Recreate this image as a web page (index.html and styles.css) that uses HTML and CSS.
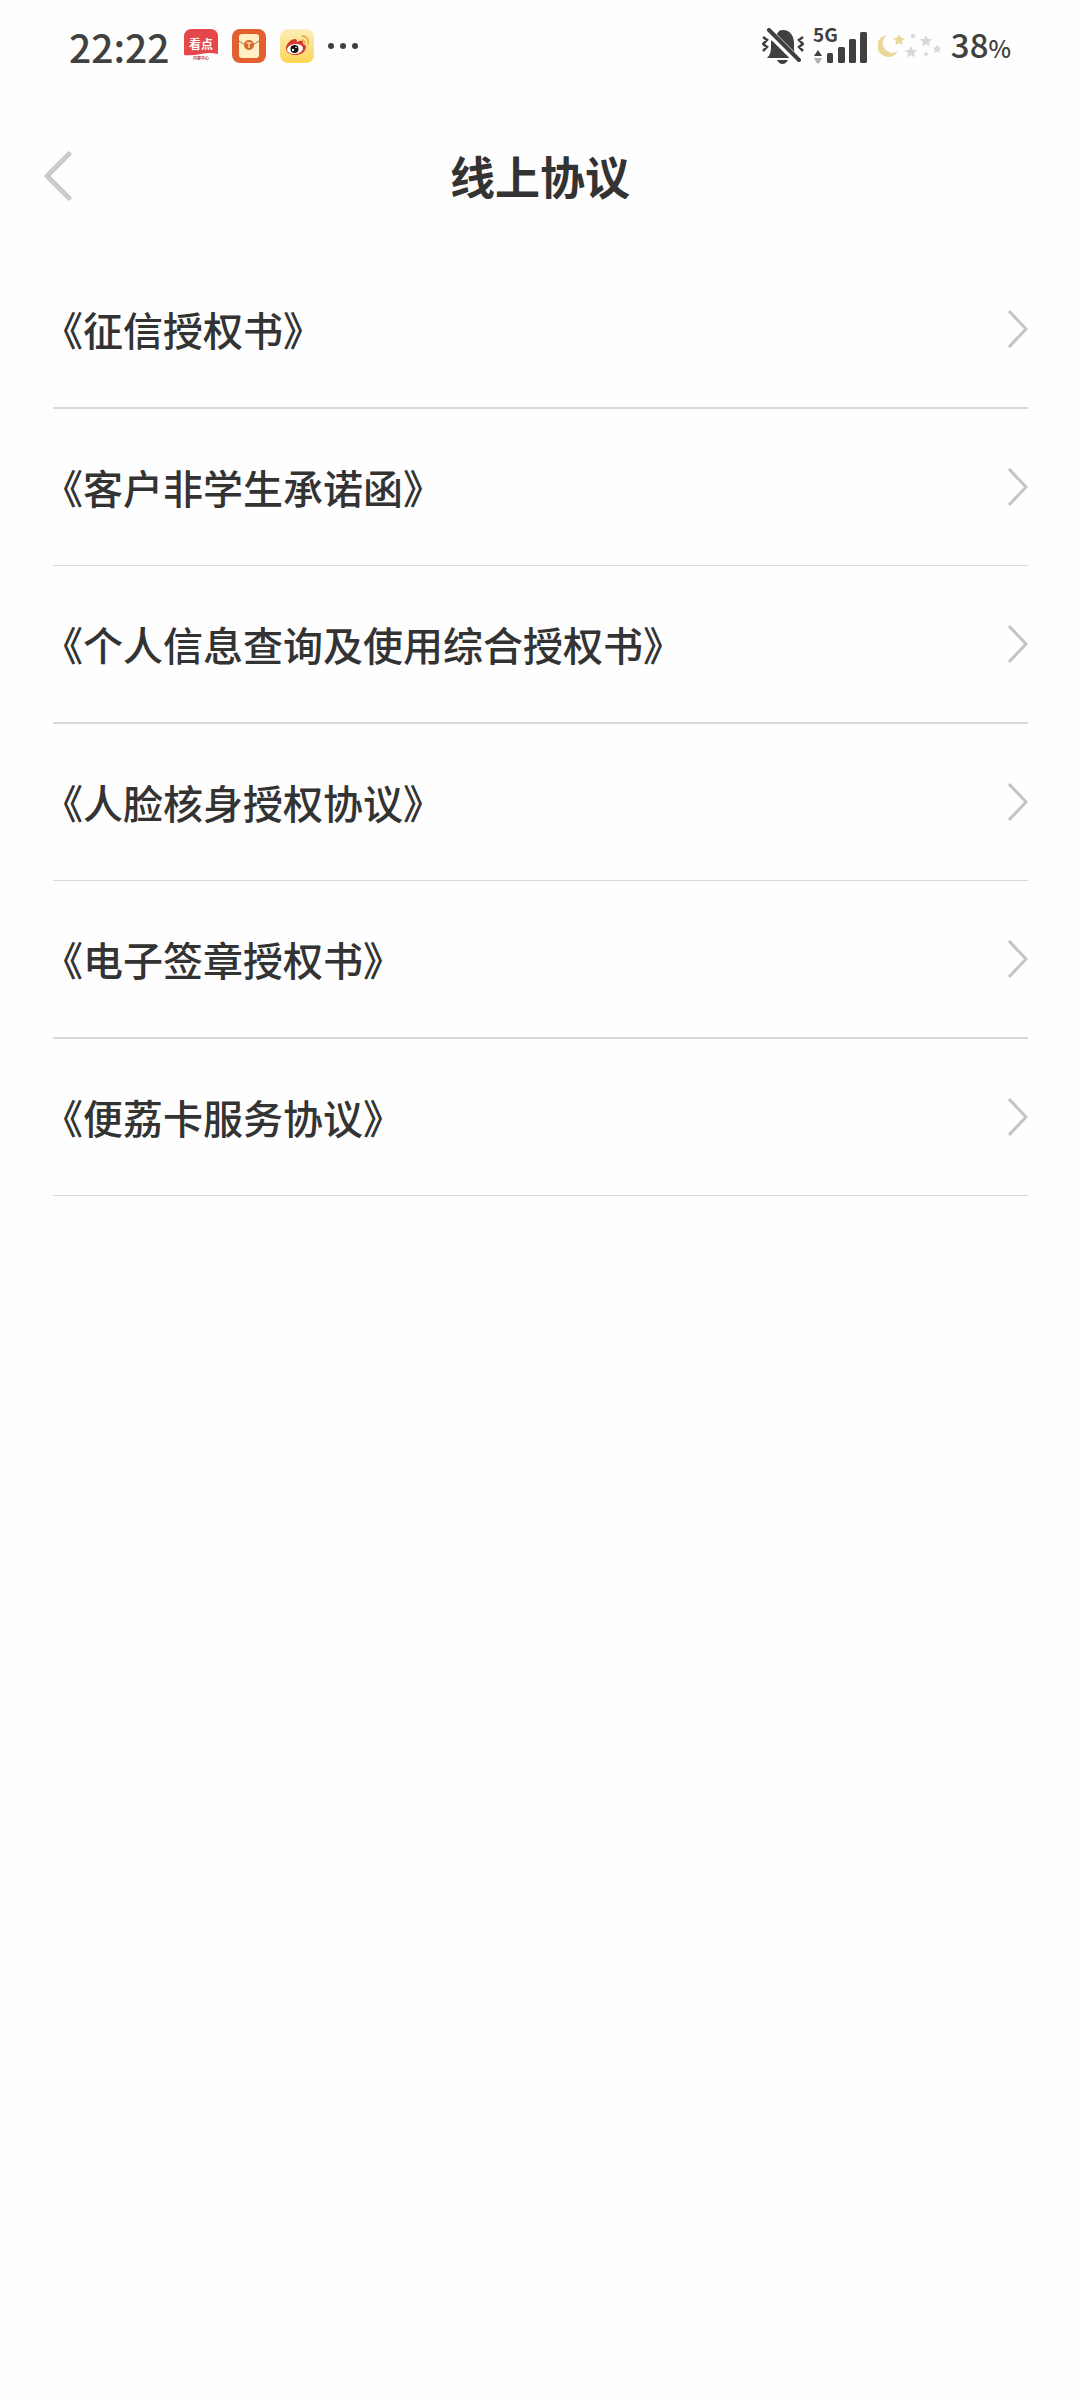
FILE: index.html
```html
<!DOCTYPE html>
<html lang="zh-CN">
<head>
    <meta charset="UTF-8">
    <meta name="viewport" content="width=device-width, initial-scale=1.0">
    <title>线上协议</title>
    <link rel="stylesheet" href="styles.css">
</head>
<body>
    <div class="status-bar">
        <div class="status-left">
            <span class="time">22:22</span>
            <svg class="app-icon" viewBox="0 0 34 34" aria-hidden="true">
                <path d="M0 26V8Q0 0 8 0H26Q34 0 34 8V25Q25 23 17 25Q8 27 0 26Z" fill="#e5474a"/>
                <text class="app-name" x="17" y="20" text-anchor="middle">看点</text>
                <text class="app-sub" x="17" y="31" text-anchor="middle">内容中心</text>
            </svg>
            <svg class="app-icon" viewBox="0 0 34 34" aria-hidden="true">
                <rect width="34" height="34" rx="8" fill="#e2602f"/>
                <rect x="7" y="5" width="20" height="24" rx="3" fill="#fff0c4"/>
                <path d="M7 12Q11 16 17 16Q23 16 27 12" fill="none" stroke="#a8673c"/>
                <circle cx="17" cy="16" r="5" fill="#d8662f"/>
                <path d="M14.500 14H19.500M17 14V19" stroke="#fbd7a4" stroke-width="1.500"/>
            </svg>
            <svg class="app-icon" viewBox="0 0 34 34" aria-hidden="true">
                <defs>
                    <linearGradient id="weiboBg" x1="0" y1="0" x2="0" y2="1">
                        <stop offset="0" stop-color="#fbeebb"/>
                        <stop offset="1" stop-color="#fbd655"/>
                    </linearGradient>
                </defs>
                <rect width="34" height="34" rx="8" fill="url(#weiboBg)"/>
                <path d="M6 19C6 15 11 10 15 10C17 10 17 12 17 13C20 11 24 11 23 15C26 16 27 18 25 21C22 28 6 28 6 19Z" fill="#d7382f"/>
                <ellipse cx="15" cy="20" rx="8" ry="5" fill="#fff" transform="rotate(-8 15 20)"/>
                <circle cx="14.500" cy="20" r="4" fill="#17100e"/>
                <circle cx="13" cy="21" r="1.200" fill="#fff"/>
                <circle cx="16" cy="18.500" r=".8" fill="#fff"/>
                <path d="M22 7Q29 7 28 15M22 11Q25 11 24.500 14" fill="none" stroke="#eea13c" stroke-width="1.400" stroke-linecap="round"/>
            </svg>
            <svg class="more-icon" viewBox="0 0 30 6" aria-hidden="true">
                <g fill="#404040"><circle cx="3" cy="3" r="3"/><circle cx="15" cy="3" r="3"/><circle cx="27" cy="3" r="3"/></g>
            </svg>
        </div>
        <div class="status-right">
            <svg class="mute-icon" viewBox="0 0 42 36" aria-hidden="true">
                <path d="M5 30C8 27 9 24 9 19V15C9 8 14 2 21 2C28 2 32 8 32 15V21C32 25 34 28 36 30Z" fill="#404040"/>
                <path d="M15 32H26Q24 36 20.500 36Q17 36 15 32Z" fill="#404040"/>
                <path d="M5 2L36 33" stroke="#fefefe" stroke-width="8"/>
                <path d="M8 2H18L9 13Z" fill="#fefefe"/>
                <path d="M7 2L37 32" stroke="#404040" stroke-width="4" stroke-linecap="round"/>
                <path d="M1 9L5 12L1 16L5 19L1 23M41 9L37 12L41 16L37 19L41 23" fill="none" stroke="#404040" stroke-width="2.500"/>
            </svg>
            <svg class="signal-icon" viewBox="0 -12 56 60" aria-label="5G">
                <text class="network" x="0" y="14">5G</text>
                <path d="M1 28L5 22L9 28Z" fill="#404040"/>
                <path d="M1 30H9L7 34Q5 37 3 34Z" fill="#b5b5b5"/>
                <g fill="#404040">
                    <rect x="14" y="25" width="6" height="10" rx="1.500"/>
                    <rect x="25" y="19" width="7" height="16" rx="1.500"/>
                    <rect x="36" y="11" width="7" height="24" rx="1.500"/>
                    <rect x="47" y="4" width="7" height="31" rx="1.500"/>
                </g>
            </svg>
            <svg class="battery-icon" viewBox="0 0 64 26" aria-hidden="true">
                <defs>
                    <path id="star" d="M0 -6L1.800 -2.300L6 -1.800L3 1.100L3.700 5.200L0 3.200L-3.700 5.200L-3 1.100L-6 -1.800L-1.800 -2.300Z"/>
                </defs>
                <path d="M9 2A11 11 0 1 0 20 18A9 9 0 0 1 9 2Z" fill="#ecd79b"/>
                <use href="#star" x="21" y="7" fill="#ecd79b"/>
                <g fill="#d8d8d8">
                    <use href="#star" x="33" y="19"/>
                    <use href="#star" x="48" y="8"/>
                    <use href="#star" transform="translate(59 16) scale(.75)"/>
                    <use href="#star" transform="translate(35 3) scale(.5)"/>
                    <use href="#star" transform="translate(48 21) scale(.45)"/>
                </g>
            </svg>
            <span class="battery">38<span class="percent">%</span></span>
        </div>
    </div>

    <header class="header">
        <button class="back" type="button" aria-label="返回">
            <svg class="back-icon" viewBox="0 0 30 50" aria-hidden="true">
                <path d="M26 3L4 25L26 47" fill="none" stroke="#cbcbcb" stroke-width="5" stroke-linecap="round" stroke-linejoin="round"/>
            </svg>
        </button>
        <h1 class="title">线上协议</h1>
    </header>

    <main>
        <ul class="list">
            <li class="item"><a class="link" href="#"><span class="name">《征信授权书》</span><svg class="arrow" viewBox="0 0 20 38" aria-hidden="true"><path d="M1 1L18 19L1 37"/></svg></a></li>
            <li class="item"><a class="link" href="#"><span class="name">《客户非学生承诺函》</span><svg class="arrow" viewBox="0 0 20 38" aria-hidden="true"><path d="M1 1L18 19L1 37"/></svg></a></li>
            <li class="item"><a class="link" href="#"><span class="name">《个人信息查询及使用综合授权书》</span><svg class="arrow" viewBox="0 0 20 38" aria-hidden="true"><path d="M1 1L18 19L1 37"/></svg></a></li>
            <li class="item"><a class="link" href="#"><span class="name">《人脸核身授权协议》</span><svg class="arrow" viewBox="0 0 20 38" aria-hidden="true"><path d="M1 1L18 19L1 37"/></svg></a></li>
            <li class="item"><a class="link" href="#"><span class="name">《电子签章授权书》</span><svg class="arrow" viewBox="0 0 20 38" aria-hidden="true"><path d="M1 1L18 19L1 37"/></svg></a></li>
            <li class="item"><a class="link" href="#"><span class="name">《便荔卡服务协议》</span><svg class="arrow" viewBox="0 0 20 38" aria-hidden="true"><path d="M1 1L18 19L1 37"/></svg></a></li>
        </ul>
    </main>
</body>
</html>
```
FILE: styles.css
```css
* {
    box-sizing: border-box;
}
body {
    margin: 0;
    background-color: #fefefe;
    color: #333;
    font-family: "Noto Sans CJK SC", sans-serif;
}
svg {
    display: block;
    flex: none;
}

/* status bar */
.status-bar {
    display: flex;
    justify-content: space-between;
    align-items: center;
    height: 92px;
    padding: 0 69px;
    color: #404040;
}
.status-left, .status-right {
    display: flex;
    align-items: center;
}
.status-left {
    gap: 14px;
}
.time {
    font-size: 39px;
    font-weight: 500;
    line-height: 40px;
}
.app-icon {
    width: 34px;
    height: 34px;
}
.app-name {
    font-size: 12px;
    font-weight: 700;
    fill: #fff;
}
.app-sub {
    font-size: 4px;
    font-weight: 700;
    fill: #b8444a;
}
.more-icon {
    width: 30px;
    height: 6px;
}
.status-right {
    gap: 9px;
}
.mute-icon {
    width: 42px;
    height: 36px;
}
.signal-icon {
    width: 56px;
    height: 60px;
}
.network {
    font-size: 19px;
    font-weight: 700;
    fill: #404040;
}
.battery-icon {
    width: 64px;
    height: 26px;
}
.battery {
    font-size: 33px;
    font-weight: 500;
    line-height: 40px;
}
.percent {
    font-size: 24px;
}

/* title bar */
.header {
    display: grid;
    grid-template-columns: 1fr auto 1fr;
    align-items: center;
    height: 159px;
    padding: 9px 43px 0;
}
.back {
    justify-self: start;
    padding: 0;
    border: none;
    background: none;
    cursor: pointer;
}
.back-icon {
    width: 30px;
    height: 50px;
}
.title {
    margin: 0;
    font-size: 45px;
    font-weight: 700;
    line-height: 60px;
}

/* agreements */
.list {
    margin: 0;
    padding: 0 52px 0 53px;
    list-style: none;
}
.item {
    border-bottom: 2px solid #d9d9d9;
}
.item:nth-child(even) {
    border-bottom-width: 1px;
}
.link {
    display: flex;
    justify-content: space-between;
    align-items: center;
    height: 156px;
    color: #333;
    text-decoration: none;
}
/* the opening bracket is blank on its left half */
.name {
    margin-left: -10px;
    font-size: 40px;
    font-weight: 500;
    line-height: 60px;
}
.arrow {
    width: 20px;
    height: 38px;
    fill: none;
    stroke: #c4c4c4;
    stroke-width: 3px;
}
```
